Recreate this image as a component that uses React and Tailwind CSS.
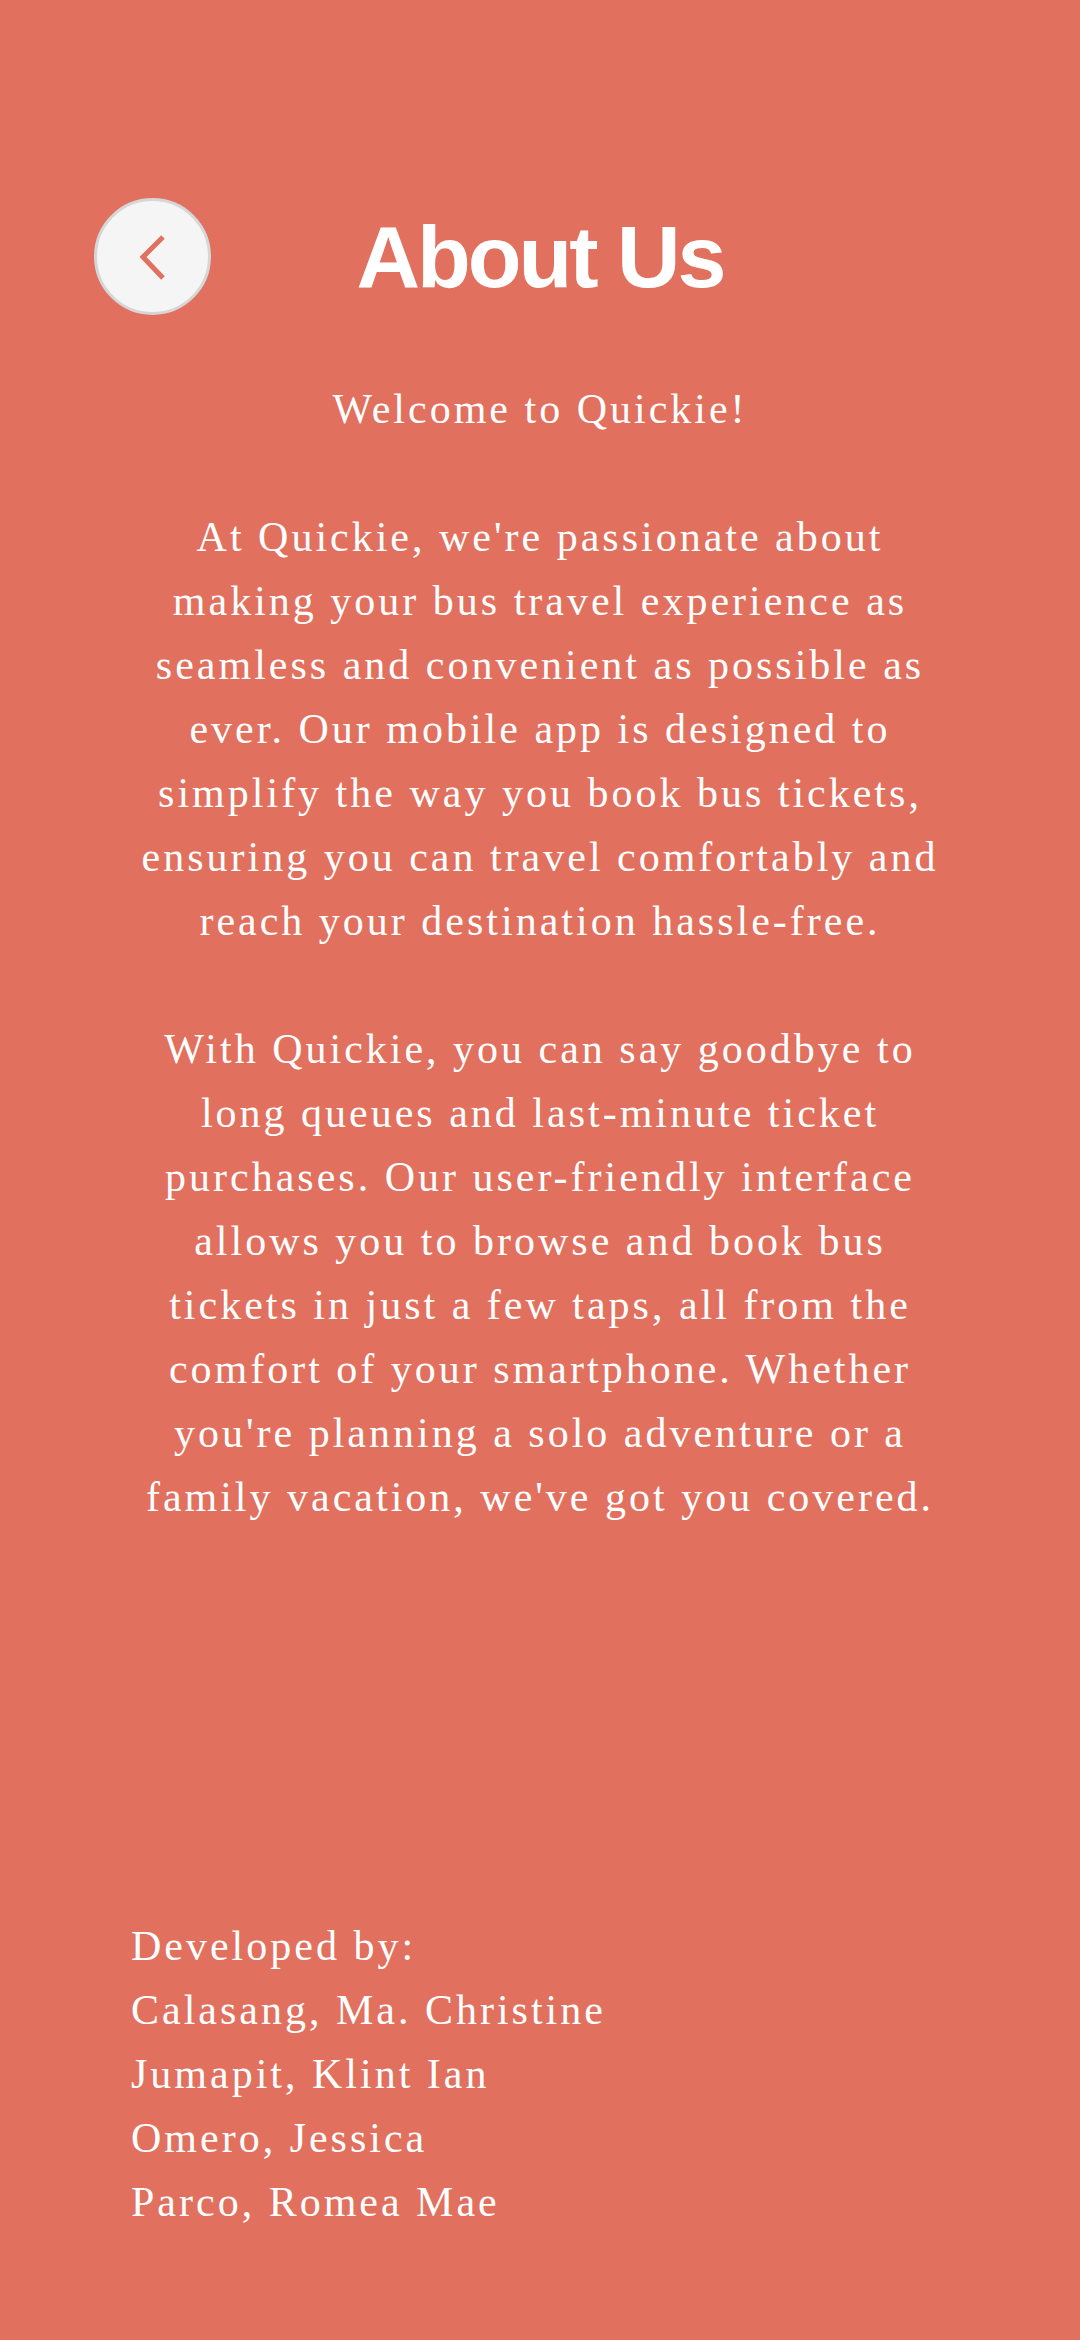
import React from 'react';

const BackButton = () => (
  <button
    type="button"
    className="flex h-[117px] w-[117px] shrink-0 items-center justify-center rounded-full border-[3px] border-[#d6d6d6] bg-[#f5f5f5]"
  >
    <svg width="40" height="50" viewBox="0 0 40 50" fill="none">
      <polyline
        points="30,5 10,25 30,46"
        stroke="#e2705e"
        strokeWidth="5"
        strokeLinecap="butt"
        strokeLinejoin="miter"
      />
    </svg>
  </button>
);

const intro = [
  "At Quickie, we're passionate about",
  'making your bus travel experience as',
  'seamless and convenient as possible as',
  'ever. Our mobile app is designed to',
  'simplify the way you book bus tickets,',
  'ensuring you can travel comfortably and',
  'reach your destination hassle-free.',
];

const more = [
  'With Quickie, you can say goodbye to',
  'long queues and last-minute ticket',
  'purchases. Our user-friendly interface',
  'allows you to browse and book bus',
  'tickets in just a few taps, all from the',
  'comfort of your smartphone. Whether',
  "you're planning a solo adventure or a",
  "family vacation, we've got you covered.",
];

const devs = ['Calasang, Ma. Christine', 'Jumapit, Klint Ian', 'Omero, Jessica', 'Parco, Romea Mae'];

const Lines = ({ lines }) =>
  lines.map((line, i) => (
    <span key={i} className="block">
      {line}
    </span>
  ));

export default function App() {
  return (
    <div className="flex min-h-[2340px] w-full flex-col bg-[#e2705e] text-white">
      {/* header */}
      <div className="flex items-center px-[94px] pt-[198px]">
        <BackButton />
        <h1 className="flex-1 text-center font-['Liberation_Sans',Arial,sans-serif] text-[88px] font-bold leading-none tracking-[-3px] text-white">
          About Us
        </h1>
        <div className="w-[117px] shrink-0" />
      </div>

      {/* about text */}
      <div className="mt-[62px] px-[60px] text-center font-['Liberation_Serif','Times_New_Roman',serif] text-[42px] leading-[64px] tracking-[3px]">
        <p>Welcome to Quickie!</p>
        <p className="mt-[64px]">
          <Lines lines={intro} />
        </p>
        <p className="mt-[64px]">
          <Lines lines={more} />
        </p>
      </div>

      {/* credits */}
      <div className="mt-[385px] px-[131px] font-['Liberation_Serif','Times_New_Roman',serif] text-[42px] leading-[64px] tracking-[3px]">
        <p>Developed by:</p>
        {devs.map((name) => (
          <p key={name}>{name}</p>
        ))}
      </div>
    </div>
  );
}
